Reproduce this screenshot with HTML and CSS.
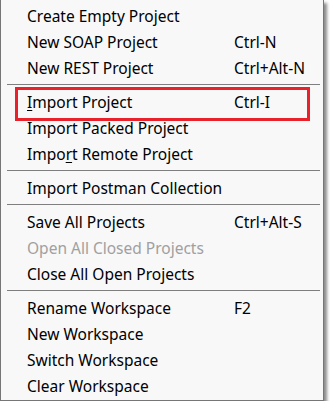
FILE: index.html
```html
<!DOCTYPE html>
<html lang="en">
<head>
	<meta charset="UTF-8">
	<title>Workspace menu</title>
	<link rel="stylesheet" href="styles.css">
</head>
<body>
	<div class="menu">
		<div class="item"><span>Create Empty Project</span></div>
		<div class="item"><span>New SOAP Project</span><span class="key">Ctrl-N</span></div>
		<div class="item"><span>New REST Project</span><span class="key">Ctrl+Alt-N</span></div>
		<hr class="sep">
		<div class="item marked"><span><u>I</u>mport Project</span><span class="key">Ctrl-I</span></div>
		<div class="item"><span>Import Packed Project</span></div>
		<div class="item"><span>Impo<u>r</u>t Remote Project</span></div>
		<hr class="sep">
		<div class="item"><span>Import Postman Collection</span></div>
		<hr class="sep">
		<div class="item"><span>Save All Projects</span><span class="key">Ctrl+Alt-S</span></div>
		<div class="item disabled"><span>Open All Closed Projects</span></div>
		<div class="item"><span>Close All Open Projects</span></div>
		<hr class="sep">
		<div class="item"><span>Rename Workspace</span><span class="key">F2</span></div>
		<div class="item"><span>New Workspace</span></div>
		<div class="item"><span>Switch Workspace</span></div>
		<div class="item"><span>Clear Workspace</span></div>
	</div>
</body>
</html>
```

FILE: styles.css
```css
html, body {
	margin: 0;
	padding: 0;
	background: #ffffff;
}
.menu {
	width: 322px;
	padding-top: 4px;
	background: #f8f8f8;
	border: 1px solid #767676;
	border-top: 0;
	box-shadow: 3px 3px 3px rgba(0, 0, 0, 0.45);
	font-family: "Noto Sans", sans-serif;
	font-size: 15.5px;
	color: #000;
}
.item {
	position: relative;
	display: grid;
	grid-template-columns: 207px auto;
	align-items: center;
	height: 26px;
	padding-left: 26px;
}
.item span {
	position: relative;
	top: -1px;
}
.item u {
	text-decoration-thickness: 1px;
	text-underline-offset: 2px;
}
.disabled {
	color: #a0a0a0;
}
.marked::after {
	content: "";
	position: absolute;
	left: 14px;
	top: -3px;
	width: 289px;
	height: 28px;
	border: 3px solid #e8212b;
}
.sep {
	height: 0;
	margin: 2px 3px 5px 6px;
	border: 0;
	border-top: 1px solid #7f7f7f;
}
```
